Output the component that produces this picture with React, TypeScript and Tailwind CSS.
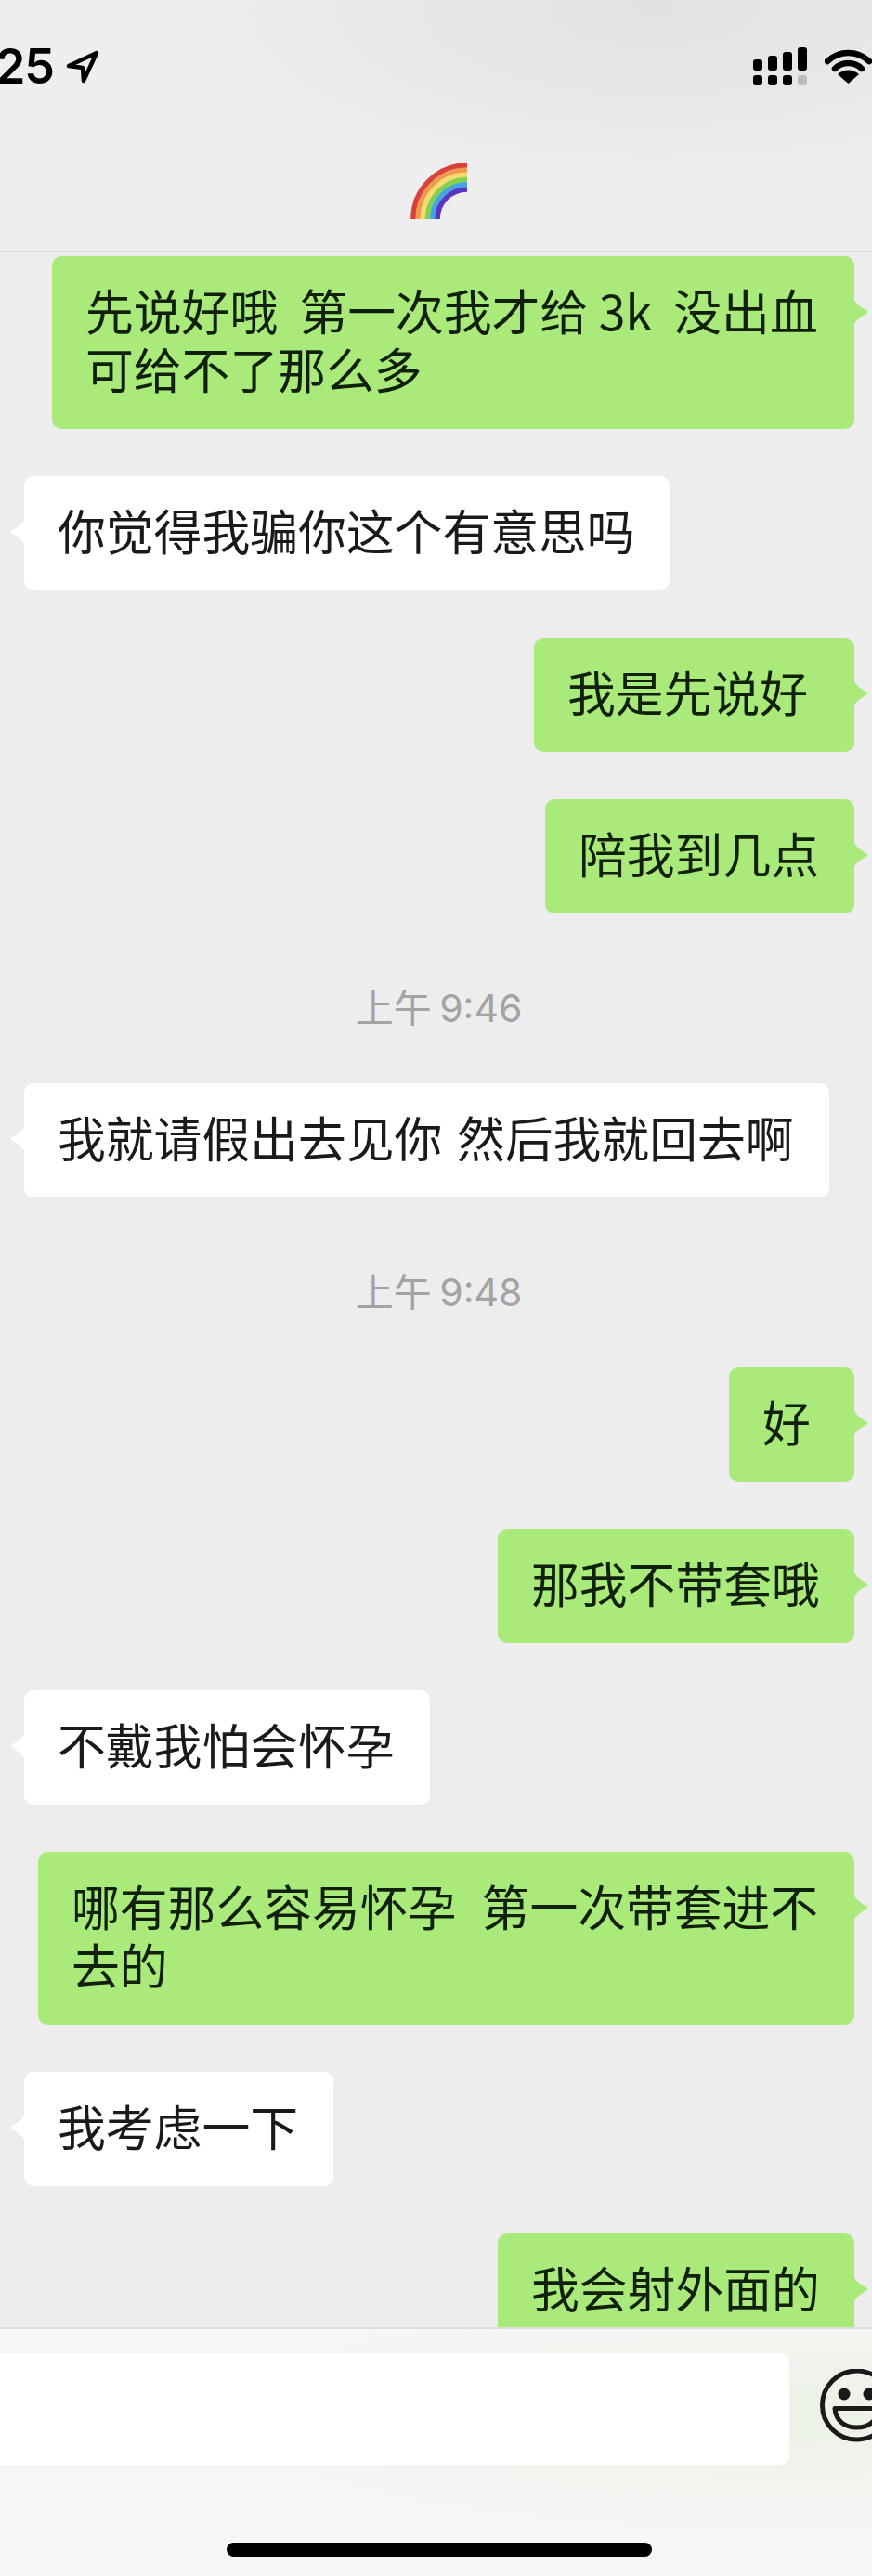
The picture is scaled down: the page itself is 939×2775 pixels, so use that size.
const cjk = '[font-family:"Noto_Sans_CJK_SC","Liberation_Sans",sans-serif]'

type Item =
  | { kind: 'time'; text: string }
  | { kind: 'left' | 'right'; text: string; width: string }

const items: Item[] = [
  { kind: 'right', text: '先说好哦  第一次我才给 3k  没出血\n可给不了那么多', width: 'w-[864px] [word-spacing:0px]' },
  { kind: 'left', text: '你觉得我骗你这个有意思吗', width: 'w-[695px]' },
  { kind: 'right', text: '我是先说好', width: 'w-[345px]' },
  { kind: 'right', text: '陪我到几点', width: 'w-[333px]' },
  { kind: 'time', text: '上午 9:46' },
  { kind: 'left', text: '我就请假出去见你 然后我就回去啊', width: 'w-[867px] [word-spacing:4px]' },
  { kind: 'time', text: '上午 9:48' },
  { kind: 'right', text: '好', width: 'w-[135px]' },
  { kind: 'right', text: '那我不带套哦', width: 'w-[384px]' },
  { kind: 'left', text: '不戴我怕会怀孕', width: 'w-[437px]' },
  { kind: 'right', text: '哪有那么容易怀孕  第一次带套进不\n去的', width: 'w-[879px] [word-spacing:2px]' },
  { kind: 'left', text: '我考虑一下', width: 'w-[333px]' },
  { kind: 'right', text: '我会射外面的', width: 'w-[384px]' },
]

function Tail({ side }: { side: 'left' | 'right' }) {
  return side === 'left' ? (
    <svg className="absolute top-[45px] -left-[15px]" width="16" height="30" viewBox="0 0 16 30">
      <path d="M16 0C14 6 8 10 1 14Q0 15 1 16C8 20 14 24 16 30Z" fill="#ffffff" />
    </svg>
  ) : (
    <svg className="absolute top-[45px] -right-[15px]" width="16" height="30" viewBox="0 0 16 30">
      <path d="M0 0C2 6 8 10 15 14Q16 15 15 16C8 20 2 24 0 30Z" fill="#a9ea7a" />
    </svg>
  )
}

function Bubble({ side, text, width }: { side: 'left' | 'right'; text: string; width: string }) {
  return (
    <div
      className={
        side === 'left'
          ? `relative self-start ml-[26px] rounded-[10px] bg-white pt-[26px] pb-[34px] pl-[36px] text-[51.8px] leading-[63px] whitespace-pre text-[#1a1a1a] ${width}`
          : `relative self-end mr-[19px] rounded-[10px] bg-[#a9ea7a] pt-[26px] pb-[34px] pl-[36px] text-[51.8px] leading-[63px] whitespace-pre text-[#10200a] ${width}`
      }
    >
      {text}
      <Tail side={side} />
    </div>
  )
}

function Rainbow() {
  const bands = ['#d9423c', '#f09a50', '#f6dc6e', '#84cf56', '#44a3e0', '#5a35c4']
  return (
    <svg width="61" height="60" viewBox="0 0 61 60">
      {bands.map((color, i) => {
        const r = 58 - i * 5.2
        return (
          <path
            key={color}
            d={`M${61 - r} 60A${r} ${r} 0 0 1 61 ${60 - r}`}
            fill="none"
            stroke={color}
            strokeWidth="5.6"
          />
        )
      })}
    </svg>
  )
}

function SignalBars() {
  return (
    <div className="flex flex-col gap-[5px]">
      <div className="flex items-end gap-[6px]">
        <div className="h-[12px] w-[10px] rounded-[3px] bg-black" />
        <div className="h-[16px] w-[10px] rounded-[3px] bg-black" />
        <div className="h-[20px] w-[10px] rounded-[3px] bg-black" />
        <div className="h-[25px] w-[10px] rounded-[3px] bg-black" />
      </div>
      <div className="flex gap-[6px]">
        <div className="h-[11px] w-[10px] rounded-[3px] bg-black" />
        <div className="h-[11px] w-[10px] rounded-[3px] bg-black" />
        <div className="h-[11px] w-[10px] rounded-[3px] bg-black" />
        <div className="h-[11px] w-[10px] rounded-[3px] bg-[#bcbcbc]" />
      </div>
    </div>
  )
}

function Wifi() {
  return (
    <svg width="51" height="37" viewBox="0 0 51 37">
      <path d="M3 13C16 1 35 1 48 13" fill="none" stroke="#000" strokeWidth="6.5" strokeLinecap="round" />
      <path d="M11 21C19 13 32 13 40 21" fill="none" stroke="#000" strokeWidth="6.5" strokeLinecap="round" />
      <path d="M25.5 37L14 27C21 21 30 21 37 27Z" fill="#000" />
    </svg>
  )
}

function Smiley() {
  return (
    <svg className="mt-[17px] shrink-0" width="80" height="80" viewBox="0 0 80 80">
      <circle cx="39.5" cy="39" r="37" fill="none" stroke="#1a1a1a" strokeWidth="5" />
      <circle cx="26" cy="27" r="6.5" fill="#1a1a1a" />
      <circle cx="53" cy="27" r="6.5" fill="#1a1a1a" />
      <path d="M16 42.5H63C62 56 52 63 39.5 63C27 63 17 56 16 42.5Z" fill="none" stroke="#1a1a1a" strokeWidth="5" strokeLinejoin="round" />
    </svg>
  )
}

export default function App() {
  return (
    <div className={`flex h-[2775px] w-[939px] flex-col overflow-hidden bg-[#ededed] ${cjk}`}>
      <header className="h-[272px] shrink-0 border-b-2 border-[#dcdcdc] bg-[radial-gradient(ellipse_at_75%_3%,#e2e2e2,#eeeeee_55%)]">
        <div className="flex h-[176px] items-start justify-between pt-[51px]">
          <div className="flex items-center">
            <span className="w-[58px] overflow-hidden text-right text-[52px] leading-[42px] font-semibold tracking-[-1px] text-black [direction:rtl] [font-family:Inter,sans-serif]">
              25
            </span>
            <svg className="ml-[13px]" width="36" height="36" viewBox="0 0 36 36">
              <path d="M33 3L3 17L18 19L19 33Z" fill="none" stroke="#000" strokeWidth="4.5" strokeLinejoin="round" />
            </svg>
          </div>
          <div className="flex items-start gap-[19px]">
            <SignalBars />
            <div className="pt-[2px]">
              <Wifi />
            </div>
          </div>
        </div>
        <div className="pl-[442px]">
          <Rainbow />
        </div>
      </header>

      <main className="flex min-h-0 flex-1 flex-col gap-[51px] overflow-hidden pt-[4px]">
        {items.map((item, i) =>
          item.kind === 'time' ? (
            <div
              key={i}
              className="h-[81px] shrink-0 pt-[26px] pl-[6px] text-center text-[41px] leading-[50px] text-[#a3a3a3] [word-spacing:-3px] [font-family:Inter,'Noto_Sans_CJK_SC',sans-serif]"
            >
              {item.text}
            </div>
          ) : (
            <Bubble key={i} side={item.kind} text={item.text} width={item.width} />
          ),
        )}
      </main>

      <footer className="h-[268px] shrink-0 border-t-2 border-[#dedede] bg-[radial-gradient(ellipse_at_90%_35%,#ecf2e7,#f6f6f6_55%)]">
        <div className="flex items-start gap-[33px] pt-[26px]">
          <div className="h-[120px] w-[850px] shrink-0 rounded-r-[10px] bg-white" />
          <Smiley />
        </div>
        <div className="mt-[84px] ml-[244px] h-[15px] w-[458px] rounded-full bg-black" />
      </footer>
    </div>
  )
}
